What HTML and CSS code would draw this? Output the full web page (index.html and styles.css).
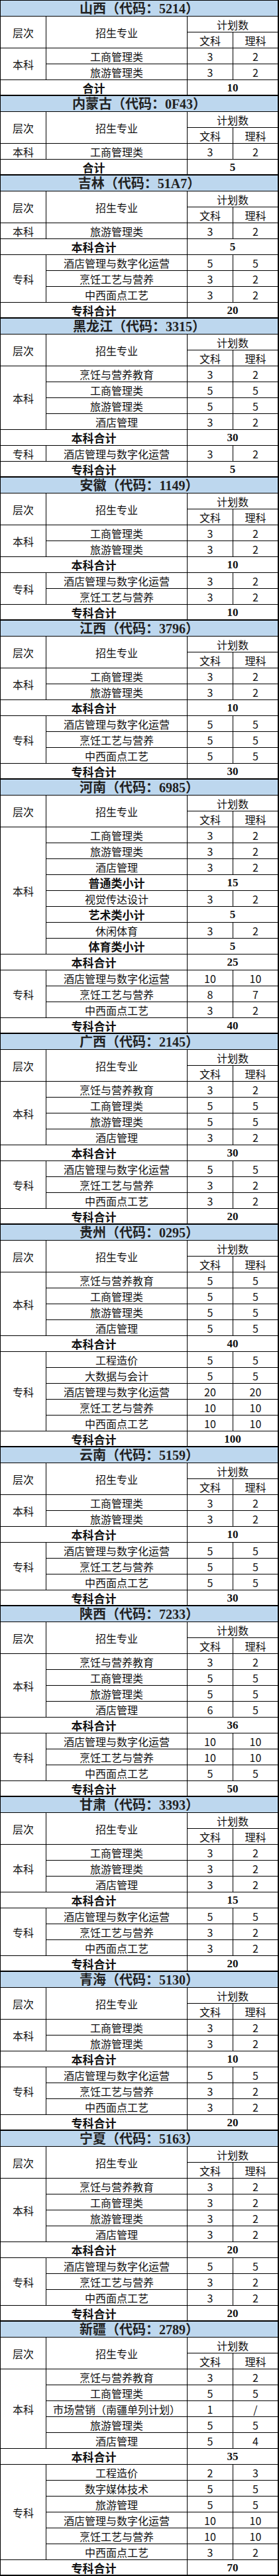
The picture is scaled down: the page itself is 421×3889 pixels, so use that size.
FILE: index.html
```html
<!DOCTYPE html>
<html lang="zh-CN">
<head>
<meta charset="utf-8">
<title>招生计划</title>
<link rel="stylesheet" href="styles.css">
</head>
<body>
<main class="sheet">

<section class="prov">
  <h2 class="title">山西（代码：5214）</h2>
  <div class="lv rs2">层次</div><div class="mj rs2">招生专业</div><div class="plan">计划数</div><div class="w">文科</div><div class="l">理科</div>
  <div class="lv rs2">本科</div>
  <div class="mj">工商管理类</div><div class="w">3</div><div class="l">2</div>
  <div class="mj">旅游管理类</div><div class="w">3</div><div class="l">2</div>
  <div class="tl">合计</div><div class="tv">10</div>
</section>

<section class="prov">
  <h2 class="title">内蒙古（代码：0F43）</h2>
  <div class="lv rs2">层次</div><div class="mj rs2">招生专业</div><div class="plan">计划数</div><div class="w">文科</div><div class="l">理科</div>
  <div class="lv">本科</div>
  <div class="mj">工商管理类</div><div class="w">3</div><div class="l">2</div>
  <div class="tl">合计</div><div class="tv">5</div>
</section>

<section class="prov">
  <h2 class="title">吉林（代码：51A7）</h2>
  <div class="lv rs2">层次</div><div class="mj rs2">招生专业</div><div class="plan">计划数</div><div class="w">文科</div><div class="l">理科</div>
  <div class="lv">本科</div>
  <div class="mj">旅游管理类</div><div class="w">3</div><div class="l">2</div>
  <div class="tl">本科合计</div><div class="tv">5</div>
  <div class="lv rs3">专科</div>
  <div class="mj">酒店管理与数字化运营</div><div class="w">5</div><div class="l">5</div>
  <div class="mj">烹饪工艺与营养</div><div class="w">3</div><div class="l">2</div>
  <div class="mj">中西面点工艺</div><div class="w">3</div><div class="l">2</div>
  <div class="tl">专科合计</div><div class="tv">20</div>
</section>

<section class="prov">
  <h2 class="title">黑龙江（代码：3315）</h2>
  <div class="lv rs2">层次</div><div class="mj rs2">招生专业</div><div class="plan">计划数</div><div class="w">文科</div><div class="l">理科</div>
  <div class="lv rs4">本科</div>
  <div class="mj">烹饪与营养教育</div><div class="w">3</div><div class="l">2</div>
  <div class="mj">工商管理类</div><div class="w">5</div><div class="l">5</div>
  <div class="mj">旅游管理类</div><div class="w">5</div><div class="l">5</div>
  <div class="mj">酒店管理</div><div class="w">3</div><div class="l">2</div>
  <div class="tl">本科合计</div><div class="tv">30</div>
  <div class="lv">专科</div>
  <div class="mj">酒店管理与数字化运营</div><div class="w">3</div><div class="l">2</div>
  <div class="tl">专科合计</div><div class="tv">5</div>
</section>

<section class="prov">
  <h2 class="title">安徽（代码：1149）</h2>
  <div class="lv rs2">层次</div><div class="mj rs2">招生专业</div><div class="plan">计划数</div><div class="w">文科</div><div class="l">理科</div>
  <div class="lv rs2">本科</div>
  <div class="mj">工商管理类</div><div class="w">3</div><div class="l">2</div>
  <div class="mj">旅游管理类</div><div class="w">3</div><div class="l">2</div>
  <div class="tl">本科合计</div><div class="tv">10</div>
  <div class="lv rs2">专科</div>
  <div class="mj">酒店管理与数字化运营</div><div class="w">3</div><div class="l">2</div>
  <div class="mj">烹饪工艺与营养</div><div class="w">3</div><div class="l">2</div>
  <div class="tl">专科合计</div><div class="tv">10</div>
</section>

<section class="prov">
  <h2 class="title">江西（代码：3796）</h2>
  <div class="lv rs2">层次</div><div class="mj rs2">招生专业</div><div class="plan">计划数</div><div class="w">文科</div><div class="l">理科</div>
  <div class="lv rs2">本科</div>
  <div class="mj">工商管理类</div><div class="w">3</div><div class="l">2</div>
  <div class="mj">旅游管理类</div><div class="w">3</div><div class="l">2</div>
  <div class="tl">本科合计</div><div class="tv">10</div>
  <div class="lv rs3">专科</div>
  <div class="mj">酒店管理与数字化运营</div><div class="w">5</div><div class="l">5</div>
  <div class="mj">烹饪工艺与营养</div><div class="w">5</div><div class="l">5</div>
  <div class="mj">中西面点工艺</div><div class="w">5</div><div class="l">5</div>
  <div class="tl">专科合计</div><div class="tv">30</div>
</section>

<section class="prov">
  <h2 class="title">河南（代码：6985）</h2>
  <div class="lv rs2">层次</div><div class="mj rs2">招生专业</div><div class="plan">计划数</div><div class="w">文科</div><div class="l">理科</div>
  <div class="lv rs8">本科</div>
  <div class="mj">工商管理类</div><div class="w">3</div><div class="l">2</div>
  <div class="mj">旅游管理类</div><div class="w">3</div><div class="l">2</div>
  <div class="mj">酒店管理</div><div class="w">3</div><div class="l">2</div>
  <div class="sub">普通类小计</div><div class="sv">15</div>
  <div class="mj">视觉传达设计</div><div class="w">3</div><div class="l">2</div>
  <div class="sub">艺术类小计</div><div class="sv">5</div>
  <div class="mj">休闲体育</div><div class="w">3</div><div class="l">2</div>
  <div class="sub">体育类小计</div><div class="sv">5</div>
  <div class="tl">本科合计</div><div class="tv">25</div>
  <div class="lv rs3">专科</div>
  <div class="mj">酒店管理与数字化运营</div><div class="w">10</div><div class="l">10</div>
  <div class="mj">烹饪工艺与营养</div><div class="w">8</div><div class="l">7</div>
  <div class="mj">中西面点工艺</div><div class="w">3</div><div class="l">2</div>
  <div class="tl">专科合计</div><div class="tv">40</div>
</section>

<section class="prov">
  <h2 class="title">广西（代码：2145）</h2>
  <div class="lv rs2">层次</div><div class="mj rs2">招生专业</div><div class="plan">计划数</div><div class="w">文科</div><div class="l">理科</div>
  <div class="lv rs4">本科</div>
  <div class="mj">烹饪与营养教育</div><div class="w">3</div><div class="l">2</div>
  <div class="mj">工商管理类</div><div class="w">5</div><div class="l">5</div>
  <div class="mj">旅游管理类</div><div class="w">5</div><div class="l">5</div>
  <div class="mj">酒店管理</div><div class="w">3</div><div class="l">2</div>
  <div class="tl">本科合计</div><div class="tv">30</div>
  <div class="lv rs3">专科</div>
  <div class="mj">酒店管理与数字化运营</div><div class="w">5</div><div class="l">5</div>
  <div class="mj">烹饪工艺与营养</div><div class="w">3</div><div class="l">2</div>
  <div class="mj">中西面点工艺</div><div class="w">3</div><div class="l">2</div>
  <div class="tl">专科合计</div><div class="tv">20</div>
</section>

<section class="prov">
  <h2 class="title">贵州（代码：0295）</h2>
  <div class="lv rs2">层次</div><div class="mj rs2">招生专业</div><div class="plan">计划数</div><div class="w">文科</div><div class="l">理科</div>
  <div class="lv rs4">本科</div>
  <div class="mj">烹饪与营养教育</div><div class="w">5</div><div class="l">5</div>
  <div class="mj">工商管理类</div><div class="w">5</div><div class="l">5</div>
  <div class="mj">旅游管理类</div><div class="w">5</div><div class="l">5</div>
  <div class="mj">酒店管理</div><div class="w">5</div><div class="l">5</div>
  <div class="tl">本科合计</div><div class="tv">40</div>
  <div class="lv rs5">专科</div>
  <div class="mj">工程造价</div><div class="w">5</div><div class="l">5</div>
  <div class="mj">大数据与会计</div><div class="w">5</div><div class="l">5</div>
  <div class="mj">酒店管理与数字化运营</div><div class="w">20</div><div class="l">20</div>
  <div class="mj">烹饪工艺与营养</div><div class="w">10</div><div class="l">10</div>
  <div class="mj">中西面点工艺</div><div class="w">10</div><div class="l">10</div>
  <div class="tl">专科合计</div><div class="tv">100</div>
</section>

<section class="prov">
  <h2 class="title">云南（代码：5159）</h2>
  <div class="lv rs2">层次</div><div class="mj rs2">招生专业</div><div class="plan">计划数</div><div class="w">文科</div><div class="l">理科</div>
  <div class="lv rs2">本科</div>
  <div class="mj">工商管理类</div><div class="w">3</div><div class="l">2</div>
  <div class="mj">旅游管理类</div><div class="w">3</div><div class="l">2</div>
  <div class="tl">本科合计</div><div class="tv">10</div>
  <div class="lv rs3">专科</div>
  <div class="mj">酒店管理与数字化运营</div><div class="w">5</div><div class="l">5</div>
  <div class="mj">烹饪工艺与营养</div><div class="w">5</div><div class="l">5</div>
  <div class="mj">中西面点工艺</div><div class="w">5</div><div class="l">5</div>
  <div class="tl">专科合计</div><div class="tv">30</div>
</section>

<section class="prov">
  <h2 class="title">陕西（代码：7233）</h2>
  <div class="lv rs2">层次</div><div class="mj rs2">招生专业</div><div class="plan">计划数</div><div class="w">文科</div><div class="l">理科</div>
  <div class="lv rs4">本科</div>
  <div class="mj">烹饪与营养教育</div><div class="w">3</div><div class="l">2</div>
  <div class="mj">工商管理类</div><div class="w">5</div><div class="l">5</div>
  <div class="mj">旅游管理类</div><div class="w">5</div><div class="l">5</div>
  <div class="mj">酒店管理</div><div class="w">6</div><div class="l">5</div>
  <div class="tl">本科合计</div><div class="tv">36</div>
  <div class="lv rs3">专科</div>
  <div class="mj">酒店管理与数字化运营</div><div class="w">10</div><div class="l">10</div>
  <div class="mj">烹饪工艺与营养</div><div class="w">10</div><div class="l">10</div>
  <div class="mj">中西面点工艺</div><div class="w">5</div><div class="l">5</div>
  <div class="tl">专科合计</div><div class="tv">50</div>
</section>

<section class="prov">
  <h2 class="title">甘肃（代码：3393）</h2>
  <div class="lv rs2">层次</div><div class="mj rs2">招生专业</div><div class="plan">计划数</div><div class="w">文科</div><div class="l">理科</div>
  <div class="lv rs3">本科</div>
  <div class="mj">工商管理类</div><div class="w">3</div><div class="l">2</div>
  <div class="mj">旅游管理类</div><div class="w">3</div><div class="l">2</div>
  <div class="mj">酒店管理</div><div class="w">3</div><div class="l">2</div>
  <div class="tl">本科合计</div><div class="tv">15</div>
  <div class="lv rs3">专科</div>
  <div class="mj">酒店管理与数字化运营</div><div class="w">5</div><div class="l">5</div>
  <div class="mj">烹饪工艺与营养</div><div class="w">3</div><div class="l">2</div>
  <div class="mj">中西面点工艺</div><div class="w">3</div><div class="l">2</div>
  <div class="tl">专科合计</div><div class="tv">20</div>
</section>

<section class="prov">
  <h2 class="title">青海（代码：5130）</h2>
  <div class="lv rs2">层次</div><div class="mj rs2">招生专业</div><div class="plan">计划数</div><div class="w">文科</div><div class="l">理科</div>
  <div class="lv rs2">本科</div>
  <div class="mj">工商管理类</div><div class="w">3</div><div class="l">2</div>
  <div class="mj">旅游管理类</div><div class="w">3</div><div class="l">2</div>
  <div class="tl">本科合计</div><div class="tv">10</div>
  <div class="lv rs3">专科</div>
  <div class="mj">酒店管理与数字化运营</div><div class="w">5</div><div class="l">5</div>
  <div class="mj">烹饪工艺与营养</div><div class="w">3</div><div class="l">2</div>
  <div class="mj">中西面点工艺</div><div class="w">3</div><div class="l">2</div>
  <div class="tl">专科合计</div><div class="tv">20</div>
</section>

<section class="prov">
  <h2 class="title">宁夏（代码：5163）</h2>
  <div class="lv rs2">层次</div><div class="mj rs2">招生专业</div><div class="plan">计划数</div><div class="w">文科</div><div class="l">理科</div>
  <div class="lv rs4">本科</div>
  <div class="mj">烹饪与营养教育</div><div class="w">3</div><div class="l">2</div>
  <div class="mj">工商管理类</div><div class="w">3</div><div class="l">2</div>
  <div class="mj">旅游管理类</div><div class="w">3</div><div class="l">2</div>
  <div class="mj">酒店管理</div><div class="w">3</div><div class="l">2</div>
  <div class="tl">本科合计</div><div class="tv">20</div>
  <div class="lv rs3">专科</div>
  <div class="mj">酒店管理与数字化运营</div><div class="w">5</div><div class="l">5</div>
  <div class="mj">烹饪工艺与营养</div><div class="w">3</div><div class="l">2</div>
  <div class="mj">中西面点工艺</div><div class="w">3</div><div class="l">2</div>
  <div class="tl">专科合计</div><div class="tv">20</div>
</section>

<section class="prov">
  <h2 class="title">新疆（代码：2789）</h2>
  <div class="lv rs2">层次</div><div class="mj rs2">招生专业</div><div class="plan">计划数</div><div class="w">文科</div><div class="l">理科</div>
  <div class="lv rs5">本科</div>
  <div class="mj">烹饪与营养教育</div><div class="w">3</div><div class="l">2</div>
  <div class="mj">工商管理类</div><div class="w">5</div><div class="l">5</div>
  <div class="mj">市场营销（南疆单列计划）</div><div class="w">1</div><div class="l">/</div>
  <div class="mj">旅游管理类</div><div class="w">5</div><div class="l">5</div>
  <div class="mj">酒店管理</div><div class="w">5</div><div class="l">4</div>
  <div class="tl">本科合计</div><div class="tv">35</div>
  <div class="lv rs6">专科</div>
  <div class="mj">工程造价</div><div class="w">2</div><div class="l">3</div>
  <div class="mj">数字媒体技术</div><div class="w">5</div><div class="l">5</div>
  <div class="mj">旅游管理</div><div class="w">5</div><div class="l">5</div>
  <div class="mj">酒店管理与数字化运营</div><div class="w">10</div><div class="l">10</div>
  <div class="mj">烹饪工艺与营养</div><div class="w">10</div><div class="l">10</div>
  <div class="mj">中西面点工艺</div><div class="w">3</div><div class="l">2</div>
  <div class="tl">专科合计</div><div class="tv">70</div>
</section>

</main>
</body>
</html>
```

FILE: styles.css
```css
html, body {
  margin: 0;
  padding: 0;
  background: #fff;
}

.sheet {
  width: 421px;
}

.prov {
  display: grid;
  grid-template-columns: 68px 212px 68px 67px;
  grid-auto-rows: 23px;
  gap: 1px;
  padding: 1px 2px 0 1px;
  background: #000;
  font-family: "Noto Sans CJK SC", sans-serif;
  font-size: 16px;
  color: #111;
}

.prov:last-child {
  padding-bottom: 1px;
}

.prov > * {
  margin: 0;
  display: flex;
  align-items: center;
  justify-content: center;
  background: #fff;
  line-height: 1;
  white-space: nowrap;
}

/* thicker rule under the last row of every province block */
.prov > :nth-last-child(-n+2) {
  box-shadow: inset 0 -1px 0 #000;
}

.title {
  grid-column: 1 / -1;
  background: #bdd7ee;
  font-family: "Liberation Serif", "Noto Sans CJK SC", serif;
  font-size: 20px;
  font-weight: 700;
  color: #222;
}

.prov > .title {
  background: #bdd7ee;
}

.lv { grid-column: 1; }
.mj { grid-column: 2; }
.w { grid-column: 3; }
.l { grid-column: 4; }
.plan { grid-column: 3 / 5; }

.rs2 { grid-row: span 2; }
.rs3 { grid-row: span 3; }
.rs4 { grid-row: span 4; }
.rs5 { grid-row: span 5; }
.rs6 { grid-row: span 6; }
.rs8 { grid-row: span 8; }

.sub {
  grid-column: 2;
  font-weight: 700;
  font-size: 17px;
}

.tl {
  grid-column: 1 / 3;
  font-weight: 700;
  font-size: 17px;
}

.sv,
.tv {
  grid-column: 3 / 5;
  font-family: "Liberation Serif", "Noto Sans CJK SC", serif;
  font-weight: 700;
  font-size: 17px;
}
```
